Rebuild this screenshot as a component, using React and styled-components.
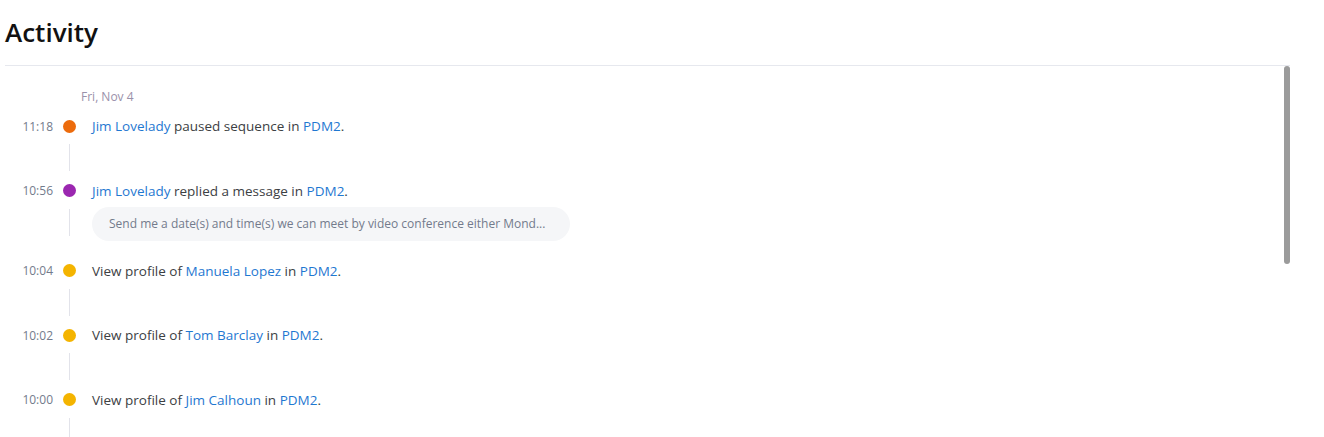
import React from "react";
import styled, { createGlobalStyle } from "styled-components";

const GlobalStyle = createGlobalStyle`
  body {
    margin: 0;
    background: #ffffff;
    font-family: "Open Sans", "Noto Sans", Arial, sans-serif;
  }
`;

const days = [
  {
    label: "Fri, Nov 4",
    items: [
      { time: "11:18", color: "#ec6b0c", parts: [["link", "Jim Lovelady"], ["text", " paused sequence in "], ["link", "PDM2"], ["text", "."]] },
      {
        time: "10:56",
        color: "#9b27b0",
        parts: [["link", "Jim Lovelady"], ["text", " replied a message in "], ["link", "PDM2"], ["text", "."]],
        message: "Send me a date(s) and time(s) we can meet by video conference either Mond...",
      },
      { time: "10:04", color: "#f4b400", parts: [["text", "View profile of "], ["link", "Manuela Lopez"], ["text", " in "], ["link", "PDM2"], ["text", "."]] },
      { time: "10:02", color: "#f4b400", parts: [["text", "View profile of "], ["link", "Tom Barclay"], ["text", " in "], ["link", "PDM2"], ["text", "."]] },
      { time: "10:00", color: "#f4b400", parts: [["text", "View profile of "], ["link", "Jim Calhoun"], ["text", " in "], ["link", "PDM2"], ["text", "."]] },
      { time: "09:47", color: "#ec6b0c", parts: [["link", "Jim Lovelady"], ["text", " started sequence in "], ["link", "PDM2"], ["text", "."]] },
      { time: "09:31", color: "#f4b400", parts: [["text", "View profile of "], ["link", "Manuela Lopez"], ["text", " in "], ["link", "PDM2"], ["text", "."]] },
      { time: "09:15", color: "#f4b400", parts: [["text", "View profile of "], ["link", "Tom Barclay"], ["text", " in "], ["link", "PDM2"], ["text", "."]] },
      { time: "09:02", color: "#f4b400", parts: [["text", "View profile of "], ["link", "Jim Calhoun"], ["text", " in "], ["link", "PDM2"], ["text", "."]] },
    ],
  },
];

const App = () => {
  return (
    <Page>
      <GlobalStyle />
      <Title>Activity</Title>
      <Frame>
        <Feed>
          {days.map((day) => (
            <Day key={day.label}>
              <DayLabel>{day.label}</DayLabel>
              {day.items.map((item, i) => (
                <Item key={i}>
                  <Row>
                    <Time>{item.time}</Time>
                    <Dot $color={item.color} />
                    <Text>
                      {item.parts.map(([kind, value], j) =>
                        kind === "link" ? <Link key={j}>{value}</Link> : <span key={j}>{value}</span>
                      )}
                    </Text>
                  </Row>
                  <Body>
                    <Line />
                    <Content>{item.message && <Bubble>{item.message}</Bubble>}</Content>
                  </Body>
                </Item>
              ))}
            </Day>
          ))}
        </Feed>
        <Track>
          <Thumb />
        </Track>
      </Frame>
    </Page>
  );
};

const Page = styled.div`
  width: 1285px;
  padding-left: 5px;
`;

const Title = styled.h1`
  margin: 0;
  padding: 13px 0 14px;
  font-size: 26px;
  line-height: 38px;
  font-weight: 600;
  color: #111111;
  border-bottom: 1px solid #e6e8ee;
`;

const Frame = styled.div`
  display: flex;
  height: 371px;
`;

const Feed = styled.div`
  flex: 1;
  overflow: hidden;
`;

const Track = styled.div`
  width: 6px;
  flex-shrink: 0;
`;

const Thumb = styled.div`
  height: 198px;
  border-radius: 3px;
  background: #9b9b9b;
`;

const Day = styled.div`
  padding-top: 23px;
`;

const DayLabel = styled.div`
  margin-left: 76px;
  margin-bottom: 11px;
  font-size: 12px;
  line-height: 16px;
  color: #9a91aa;
`;

const Item = styled.div`
  display: flex;
  flex-direction: column;
`;

const Row = styled.div`
  display: flex;
  align-items: center;
  height: 20px;
`;

const Time = styled.span`
  width: 48px;
  text-align: right;
  font-size: 12px;
  color: #737b8c;
`;

const Dot = styled.span`
  width: 13px;
  height: 13px;
  margin-left: 10px;
  margin-right: 16px;
  border-radius: 50%;
  background: ${(p) => p.$color};
  flex-shrink: 0;
`;

const Text = styled.div`
  font-size: 13.5px;
  color: #3c4043;
  white-space: nowrap;
`;

const Link = styled.span`
  color: #1f78d1;
  cursor: pointer;
`;

const Body = styled.div`
  display: flex;
  min-height: 44.5px;
`;

const Line = styled.div`
  width: 1px;
  height: 27px;
  margin: 8px 22px 0 64px;
  background: #e2e3ea;
  flex-shrink: 0;
`;

const Content = styled.div`
  padding: 6px 0 20px;
`;

const Bubble = styled.div`
  width: 478px;
  box-sizing: border-box;
  height: 34px;
  padding: 0 17px;
  border-radius: 17px;
  background: #f5f6f8;
  font-size: 12px;
  line-height: 34px;
  color: #737b8c;
  white-space: nowrap;
`;

export default App;
